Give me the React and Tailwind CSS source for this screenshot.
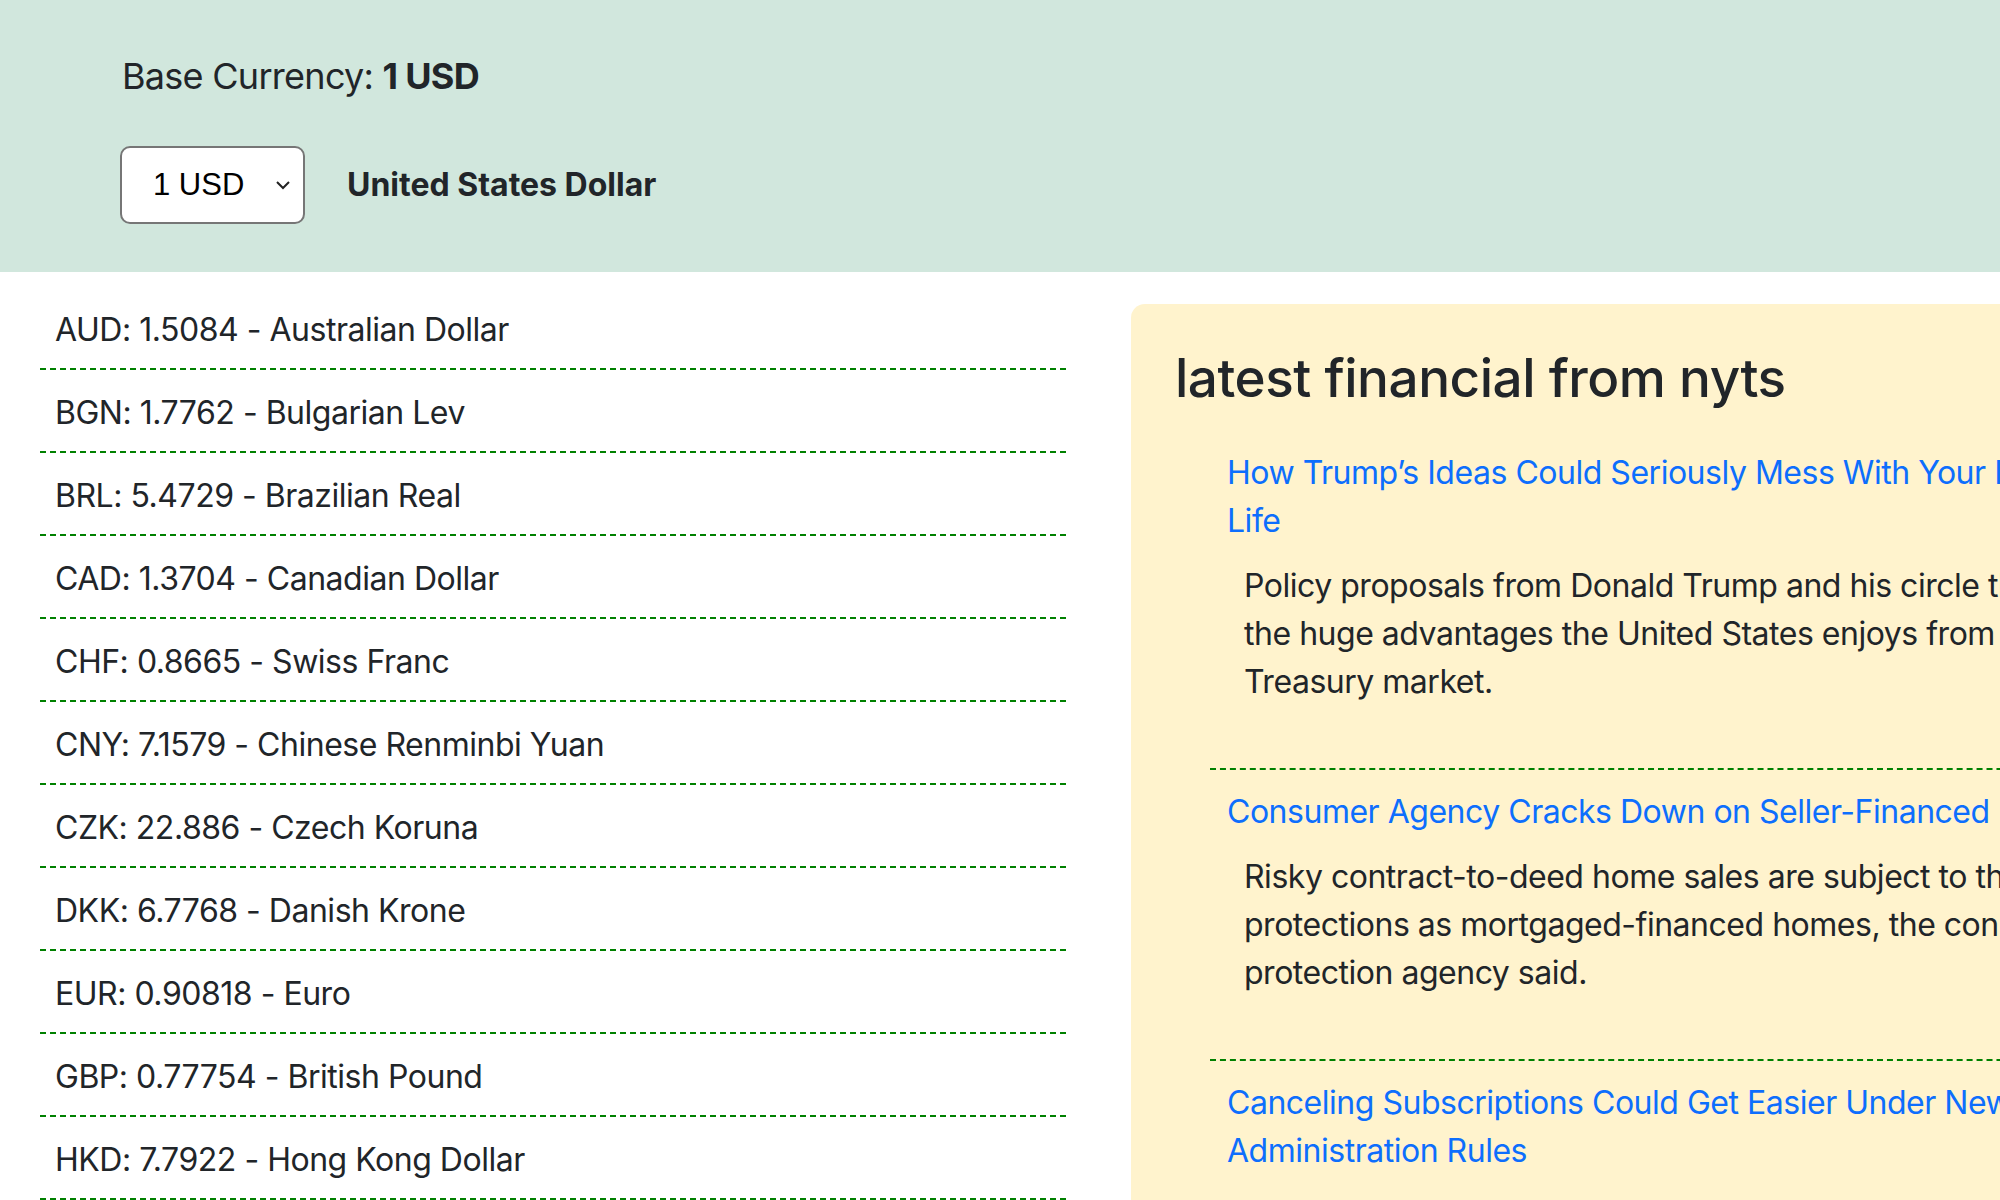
import React from "react";

const rates = [
  ["AUD", "1.5084", "Australian Dollar"],
  ["BGN", "1.7762", "Bulgarian Lev"],
  ["BRL", "5.4729", "Brazilian Real"],
  ["CAD", "1.3704", "Canadian Dollar"],
  ["CHF", "0.8665", "Swiss Franc"],
  ["CNY", "7.1579", "Chinese Renminbi Yuan"],
  ["CZK", "22.886", "Czech Koruna"],
  ["DKK", "6.7768", "Danish Krone"],
  ["EUR", "0.90818", "Euro"],
  ["GBP", "0.77754", "British Pound"],
  ["HKD", "7.7922", "Hong Kong Dollar"],
];

const news = [
  {
    title: ["How Trump’s Ideas Could Seriously Mess With Your Financial", "Life"],
    body: [
      "Policy proposals from Donald Trump and his circle threaten to undermine",
      "the huge advantages the United States enjoys from the $27 trillion",
      "Treasury market.",
    ],
  },
  {
    title: ["Consumer Agency Cracks Down on Seller-Financed Home Sales"],
    body: [
      "Risky contract-to-deed home sales are subject to the same consumer",
      "protections as mortgaged-financed homes, the consumer financial",
      "protection agency said.",
    ],
  },
  {
    title: ["Canceling Subscriptions Could Get Easier Under New Biden", "Administration Rules"],
    body: [],
  },
];

export default function App() {
  return (
    <div className="w-[2000px] h-[1200px] overflow-hidden bg-white text-[#212529] font-['Inter',sans-serif] tracking-[-0.03em]">
      {/* header */}
      <div className="h-[272px] bg-[#d1e7dd] pl-[122px] pt-[52px]">
        <div className="text-[36px] leading-[48px] tracking-[-0.02em]">
          Base Currency: <span className="font-bold">1 USD</span>
        </div>
        <div className="flex items-center gap-[42px] mt-[46px] -ml-[2px]">
          <div className="w-[185px] h-[78px] bg-white border-2 border-[#767676] rounded-[10px] flex items-center justify-between pl-[31px] pr-[12px] font-['Liberation_Sans',sans-serif] tracking-normal text-[31px] text-black">
            <span>1 USD</span>
            <svg width="16" height="10" viewBox="0 0 16 10" fill="none" stroke="#222" strokeWidth="2">
              <path d="M2 2l6 6 6-6" />
            </svg>
          </div>
          <span className="text-[32px] font-bold tracking-normal">United States Dollar</span>
        </div>
      </div>

      <div className="flex">
        {/* rates */}
        <ul className="w-[1026px] ml-[40px] mt-[15px] shrink-0">
          {rates.map(([code, rate, name]) => (
            <li key={code} className="pl-[15px] pt-[19px] pb-[14px] text-[32px] leading-[48px] border-b-2 border-dashed border-[green]">
              {code}: {rate} - {name}
            </li>
          ))}
        </ul>

        {/* news */}
        <div className="ml-[65px] mt-[32px] w-[1200px] shrink-0 bg-[#fff3cd] rounded-tl-[14px] pl-[44px] pt-[40px]">
          <h2 className="text-[53px] leading-[68px] font-medium mb-[19px]">latest financial from nyts</h2>
          <ul className="pl-[35px]">
            {news.map((n, i) => (
              <li key={i} className={`pt-[18px] pb-[30px] border-dashed border-[green] ${i < news.length - 1 ? "border-b-2" : ""}`}>
                <a className="block pl-[17px] text-[32px] leading-[48px] text-[#0d6efd] whitespace-nowrap">
                  {n.title.map((t, j) => (
                    <span key={j} className="block">{t}</span>
                  ))}
                </a>
                {n.body.length > 0 && (
                  <p className="pl-[34px] mt-[17px] mb-[32px] text-[32px] leading-[48px] whitespace-nowrap">
                    {n.body.map((t, j) => (
                      <span key={j} className="block">{t}</span>
                    ))}
                  </p>
                )}
              </li>
            ))}
          </ul>
        </div>
      </div>
    </div>
  );
}
